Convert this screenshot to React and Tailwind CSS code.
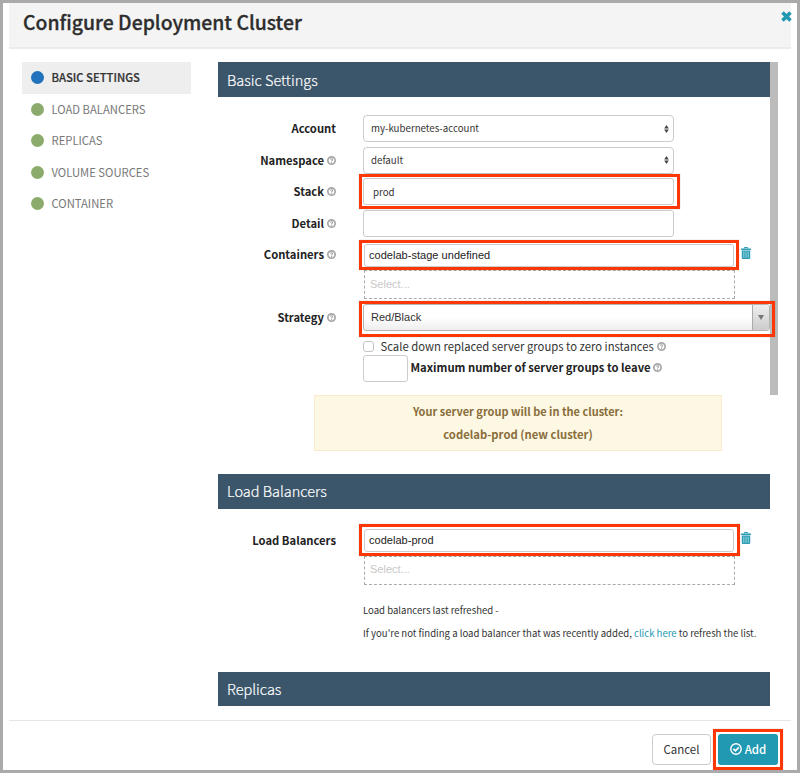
import React from "react";

const navItems = [
  { label: "BASIC SETTINGS", active: true },
  { label: "LOAD BALANCERS" },
  { label: "REPLICAS" },
  { label: "VOLUME SOURCES" },
  { label: "CONTAINER" },
];

function Help({ className = "" }) {
  return (
    <svg viewBox="0 0 16 16" className={`h-[9px] w-[9px] shrink-0 ${className}`}>
      <circle cx="8" cy="8" r="6.5" fill="#fff" stroke="#a6a6a6" strokeWidth="3" />
      <path d="M6 6.3 C6.2 4.4 10 4.5 9.9 6.5 C9.8 7.8 8.1 7.8 8.1 9.3" fill="none" stroke="#a3a3a3" strokeWidth="1.8" />
      <rect x="7.1" y="10.3" width="2" height="2" fill="#a3a3a3" />
    </svg>
  );
}

function Trash({ className }) {
  return (
    <svg viewBox="0 0 10 12" className={`h-[12px] w-[10px] ${className}`}>
      <path d="M3.3 1.6 V0.5 H6.7 V1.6" fill="none" stroke="#2b9db5" strokeWidth="1" />
      <rect x="0" y="1.4" width="10" height="1.5" rx="0.4" fill="#2b9db5" />
      <path d="M0.8 3.4 H9.2 V11 Q9.2 12 8.2 12 H1.8 Q0.8 12 0.8 11 Z" fill="#2b9db5" />
      <path d="M2.8 4.6 V10.8 M5 4.6 V10.8 M7.2 4.6 V10.8" stroke="#a6d8e2" strokeWidth="0.9" />
    </svg>
  );
}

function Highlight({ className }) {
  return (
    <div
      className={`pointer-events-none absolute z-10 border-[3px] border-[#fd3706] shadow-[0_0_1px_rgba(0,0,0,0.3)] ${className}`}
    />
  );
}

function SectionBar({ title, className = "h-[35px]" }) {
  return (
    <h2
      className={`flex shrink-0 items-center bg-[#3b556a] pl-[9px] text-[14.53px] leading-[20px] font-light text-white [-webkit-text-stroke:0.2px_#fff] ${className}`}
    >
      {title}
    </h2>
  );
}

function Row({ label, help, align = "items-center", children, className = "" }) {
  return (
    <div className={`flex ${align} ${className}`}>
      <div className="flex h-[31.5px] w-[118px] shrink-0 items-center justify-end text-[11.24px] font-bold text-[#222]">
        <span className="whitespace-nowrap">{label}</span>
        {help && <Help className="ml-[3px]" />}
      </div>
      <div className="relative ml-[27px]">{children}</div>
    </div>
  );
}

function Select({ value }) {
  return (
    <div className="flex h-[27px] w-[311px] items-center justify-between rounded-[4px] border border-[#ccc] pr-[4px] pl-[7px] text-[9.71px] text-[#333]">
      <span>{value}</span>
      <svg viewBox="0 0 6 10" className="h-[10px] w-[5px]">
        <path d="M3 0.2 L5.8 4.3 H0.2 Z M3 9.8 L5.8 5.7 H0.2 Z" fill="#444" />
      </svg>
    </div>
  );
}

function Picker({ value, highlight }) {
  return (
    <div className="relative w-[371px]">
      <div className="ml-px flex h-[23px] items-center rounded-[3px] border border-[#ccc] pl-[4px] font-['Liberation_Sans',Arial,sans-serif] text-[11px] tracking-[0.03px] text-[#222]">
        {value}
      </div>
      <Highlight className={highlight} />
      <div className="mt-[3.5px] ml-px flex h-[29px] w-[371px] items-center border border-dashed border-[#aaa] pb-px pl-[5px] font-['Liberation_Sans',Arial,sans-serif] text-[11px] text-[#c8c8c8]">
        Select...
      </div>
      <Trash className="absolute top-[3px] left-[378px]" />
    </div>
  );
}

export default function App() {
  return (
    <div className="flex h-[773px] w-[800px] flex-col overflow-hidden border-[3px] border-[#aaa] bg-white font-['Noto_Sans_CJK_SC',sans-serif] text-[#333]">
      <header className="relative mx-[6px] h-[46px] shrink-0 border-b-2 border-[#ebebeb] bg-[#f4f4f4] pl-[14px]">
        <h1 className="pt-[5px] text-[19.4px] leading-[28px] font-medium text-[#2d2d2d] [-webkit-text-stroke:0.3px_#2d2d2d]">
          Configure Deployment Cluster
        </h1>
        <svg viewBox="0 0 11 11" className="absolute top-[8px] left-[772px] h-[11px] w-[11px]">
          <path d="M1.5 1.5 L9.5 9.5 M9.5 1.5 L1.5 9.5" stroke="#2198b2" strokeWidth="3.6" />
        </svg>
      </header>

      <div className="flex h-[671px] shrink-0 px-[19px] pt-[13px]">
        <nav className="w-[169px] shrink-0">
          {navItems.map((item) => (
            <div
              key={item.label}
              className={`flex h-[31.5px] items-center pl-[9px] text-[11.25px] ${
                item.active
                  ? "bg-[#eee] font-medium text-[#333] [-webkit-text-stroke:0.2px_#333]"
                  : "text-[#777]"
              }`}
            >
              <span
                className={`mr-[7.5px] h-[13px] w-[13px] rounded-full ${
                  item.active ? "bg-[#1f72bb]" : "bg-[#8aab6c]"
                }`}
              />
              {item.label}
            </div>
          ))}
        </nav>

        <main className="ml-[27px] flex w-[552px] shrink-0 flex-col">
          <SectionBar title="Basic Settings" />
          <div className="pt-[16px]">
            <Row label="Account" className="h-[31.5px]">
              <Select value="my-kubernetes-account" />
            </Row>
            <Row label="Namespace" help className="h-[31.5px]">
              <Select value="default" />
            </Row>
            <Row label="Stack" help className="h-[31.5px]">
              <div className="flex h-[27px] w-[311px] items-center rounded-[3px] border border-[#ccc] pt-px pl-[9px] text-[9.71px] text-[#333]">
                prod
              </div>
              <Highlight className="-top-[4px] -left-[4px] h-[35px] w-[321px]" />
            </Row>
            <Row label="Detail" help className="h-[31.5px]">
              <div className="h-[27px] w-[311px] rounded-[3px] border border-[#ccc]" />
            </Row>
            <Row label="Containers" help align="items-start" className="h-[62.5px]">
              <div className="pt-[4.5px]">
                <Picker
                  value="codelab-stage undefined"
                  highlight="-top-[3.5px] -left-[4px] h-[30px] w-[380px]"
                />
              </div>
            </Row>
            <Row label="Strategy" help align="items-start" className="h-[35.5px]">
              <div className="mt-[2.5px] flex h-[27px] w-[407px] rounded-[3px] border border-[#b4b4b4] bg-linear-to-b from-white from-50% to-[#ededed] font-['Liberation_Sans',Arial,sans-serif] text-[11px] text-[#333]">
                <span className="flex flex-1 items-center pl-[7px]">Red/Black</span>
                <span className="flex w-[17px] items-center justify-center rounded-r-[3px] border-l border-[#aaa] bg-linear-to-b from-[#eee] to-[#ccc] pb-px">
                  <svg viewBox="0 0 6 5" className="h-[5px] w-[6px]">
                    <path d="M0 0 H6 L3 5 Z" fill="#777" />
                  </svg>
                </span>
              </div>
              <Highlight className="-top-[0.5px] -left-[4px] h-[36px] w-[416px]" />
            </Row>
            <div className="ml-[145px]">
              <label className="flex h-[17.5px] items-center pt-px text-[11.29px] whitespace-nowrap">
                <span className="mr-[6.5px] h-[11px] w-[11px] rounded-[3px] border border-[#c4c4c4] bg-white" />
                Scale down replaced server groups to zero instances
                <Help className="ml-[3px]" />
              </label>
              <div className="flex h-[27px] text-[11.28px] font-bold whitespace-nowrap text-[#222]">
                <span className="mr-[2.5px] h-[27px] w-[45px] rounded-[3px] border border-[#ccc]" />
                <span className="flex h-[25px] items-center">
                  Maximum number of server groups to leave
                  <Help className="ml-[2.5px]" />
                </span>
              </div>
            </div>
          </div>
          <div className="mt-[13px] ml-[96px] h-[56px] w-[408px] border border-[#faebcc] bg-[#fcf8e3] pt-[4.5px] text-center text-[11.27px] leading-[22.5px] font-bold text-[#8a6d3b]">
            <p className="text-[10.98px]">Your server group will be in the cluster:</p>
            <p>codelab-prod (new cluster)</p>
          </div>

          <SectionBar title="Load Balancers" className="mt-[23px] h-[35px]" />
          <Row label="Load Balancers" align="items-start" className="mt-[16px]">
            <div className="pt-[4.5px]">
              <Picker
                value="codelab-prod"
                highlight="-top-[5.5px] -left-[4px] h-[32px] w-[381px]"
              />
            </div>
          </Row>
          <div className="mt-[14.5px] ml-[145px] text-[9.58px] leading-[23px] whitespace-nowrap">
            <p>Load balancers last refreshed -</p>
            <p>
              If you're not finding a load balancer that was recently added,{" "}
              <a className="text-[#2199b3]">click here</a> to refresh the list.
            </p>
          </div>

          <SectionBar title="Replicas" className="mt-auto mb-[14px] h-[34px]" />
        </main>
        <div className="h-[333px] w-[8px] shrink-0 bg-[#bcbcbc]" />
      </div>

      <footer className="mx-[6px] flex flex-1 justify-end border-t border-[#e5e5e5] pt-[13px] pr-[13px] text-[11.48px]">
        <button className="flex h-[31px] w-[59px] items-center justify-center rounded-[4px] border border-[#ccc] bg-white text-[#333]">
          Cancel
        </button>
        <div className="relative ml-[7px]">
          <button className="flex h-[31px] w-[60px] items-center justify-center rounded-[3px] bg-[#2199b3] font-medium text-white">
            <svg viewBox="0 0 12 12" className="mr-[3px] mb-[2px] h-[12px] w-[12px]">
              <circle cx="6" cy="6" r="5.2" fill="none" stroke="white" strokeWidth="1.4" />
              <path d="M3.4 5.9 L5.4 7.9 L8.8 4.3" fill="none" stroke="white" strokeWidth="1.7" />
            </svg>
            Add
          </button>
          <Highlight className="-top-[5px] -left-[5px] h-[41px] w-[70px]" />
        </div>
      </footer>
    </div>
  );
}
